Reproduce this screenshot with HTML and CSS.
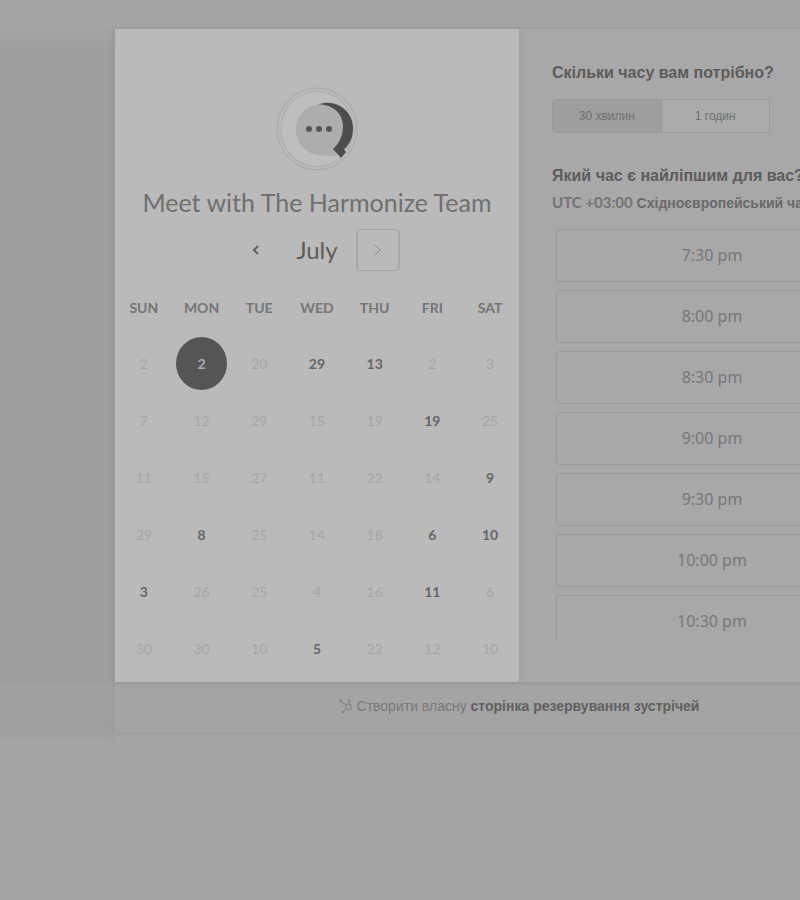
FILE: index.html
```html
<!DOCTYPE html>
<html lang="uk">
<head>
<meta charset="utf-8">
<title>Meet with The Harmonize Team</title>
<link rel="stylesheet" href="styles.css">
</head>
<body>
<div class="page">
  <main class="scheduler">
    <div class="panels">
      <section class="calendar">
        <svg class="avatar" viewBox="0 0 84 86" aria-hidden="true">
          <ellipse class="ring-outer" cx="42" cy="43" rx="40" ry="41"/>
          <ellipse class="ring-inner" cx="42" cy="43" rx="36" ry="37.500"/>
          <path class="logo-bubble" d="M44 19 C58 18 68 28 68 41 C68 50 65 56 59 61 L62 70 C57 70 51 70 44 69 C31 68 21 57 21 44 C21 30 31 19 44 19Z"/>
          <path class="logo-dark" d="M43 18.500 C61 12 78 25 78 42 C78 51 75 58 69 63.500 L71 66 L66 72 L58 63 L62.500 58 C66 53 68 47 68 40 C68 28 58 18 43 18.500Z"/>
          <circle class="logo-dot" cx="34" cy="43" r="3"/>
          <circle class="logo-dot" cx="44" cy="43" r="3"/>
          <circle class="logo-dot" cx="54" cy="43" r="3"/>
        </svg>
        <h1 class="title">Meet with The Harmonize Team</h1>
        <div class="month">
          <button class="nav" type="button" aria-label="Previous month"><svg class="chevron chevron-strong" viewBox="0 0 12 12"><path d="M8 2 L4 6 L8 10"/></svg></button>
          <h2 class="month-name">July</h2>
          <button class="nav nav-focus" type="button" aria-label="Next month"><svg class="chevron" viewBox="0 0 12 12"><path d="M3 1 L8 6 L3 11"/></svg></button>
        </div>
        <table class="days">
          <thead><tr><th>SUN</th><th>MON</th><th>TUE</th><th>WED</th><th>THU</th><th>FRI</th><th>SAT</th></tr></thead>
          <tbody>
            <tr><td>2</td><td><button class="day selected" type="button">2</button></td><td>20</td><td><button class="day" type="button">29</button></td><td><button class="day" type="button">13</button></td><td>2</td><td>3</td></tr>
            <tr><td>7</td><td>12</td><td>29</td><td>15</td><td>19</td><td><button class="day" type="button">19</button></td><td>25</td></tr>
            <tr><td>11</td><td>15</td><td>27</td><td>11</td><td>22</td><td>14</td><td><button class="day" type="button">9</button></td></tr>
            <tr><td>29</td><td><button class="day" type="button">8</button></td><td>25</td><td>14</td><td>18</td><td><button class="day" type="button">6</button></td><td><button class="day" type="button">10</button></td></tr>
            <tr><td><button class="day" type="button">3</button></td><td>26</td><td>25</td><td>4</td><td>16</td><td><button class="day" type="button">11</button></td><td>6</td></tr>
            <tr><td>30</td><td>30</td><td>10</td><td><button class="day" type="button">5</button></td><td>22</td><td>12</td><td>10</td></tr>
          </tbody>
        </table>
      </section>
      <section class="times">
        <h2 class="question">Скільки часу вам потрібно?</h2>
        <div class="durations">
          <button class="duration active" type="button">30 хвилин</button>
          <button class="duration" type="button">1 годин</button>
        </div>
        <h2 class="question">Який час є найліпшим для вас?</h2>
        <p class="zone"><span class="offset">UTC +03:00</span> Східноєвропейський час</p>
        <div class="slots">
          <button class="slot" type="button">7:30 pm</button>
          <button class="slot" type="button">8:00 pm</button>
          <button class="slot" type="button">8:30 pm</button>
          <button class="slot" type="button">9:00 pm</button>
          <button class="slot" type="button">9:30 pm</button>
          <button class="slot" type="button">10:00 pm</button>
          <button class="slot" type="button">10:30 pm</button>
        </div>
      </section>
    </div>
    <footer class="footer">
      <svg class="sprocket" viewBox="0 0 14 14" aria-hidden="true"><circle cx="9.500" cy="8" r="3"/><path d="M1 2 L7.500 6 M10 5 V2 M7.500 10 L4 13"/><circle class="knob" cx="1.500" cy="2" r="1.200"/><circle class="knob" cx="10" cy="1.500" r="1"/><circle class="knob" cx="4" cy="13" r="1"/></svg>
      <span>Створити власну <a class="link" href="#">сторінка резервування зустрічей</a></span>
    </footer>
  </main>
</div>
</body>
</html>
```
FILE: styles.css
```css
* { box-sizing: border-box; }
body {
  margin: 0;
  background: #a5a5a5;
  color: #6f6f6f;
  font-family: "Liberation Sans", Arial, sans-serif;
}
h1, h2, p { margin: 0; }
button {
  margin: 0;
  padding: 0;
  border: 0;
  background: none;
  color: inherit;
  font: inherit;
}
.page { display: flex; overflow: hidden; }
.page::before {
  content: "";
  flex: 0 0 115px;
  background: linear-gradient(#a5a5a5 24px, #9e9e9e 50px, #9e9e9e 680px, #a1a1a1 684px, #9f9f9f 730px, #a5a5a5 745px);
}
.scheduler {
  flex: 0 0 808px;
  margin: 29px 0 20px;
  background: #a4a4a4;
  box-shadow: 0 1px 6px #989898;
}
.panels {
  display: flex;
  background: #a8a8a8;
  box-shadow: 0 1px 4px #959595;
}
.calendar {
  flex: 0 0 50%;
  display: flex;
  flex-direction: column;
  align-items: center;
  padding: 57px 0 5px;
  background: #bababa;
  box-shadow: 0 1px 3px #959595;
  font-family: Lato, sans-serif;
}
.avatar { width: 84px; height: 86px; }
.ring-outer { fill: #b8b8b8; stroke: #a9a9a9; }
.ring-inner { fill: #bebebe; stroke: #adadad; }
.logo-dark { fill: #4d4d4d; }
.logo-bubble { fill: #adadad; }
.logo-dot { fill: #555; }
.title {
  margin-top: 14px;
  font-size: 25px;
  line-height: 32px;
  font-weight: 400;
}
.month {
  display: flex;
  align-items: center;
  gap: 19px;
  margin-top: 11px;
}
.nav {
  display: grid;
  place-items: center;
  width: 42px;
  height: 42px;
  border: 1px solid transparent;
  border-radius: 3px;
}
.nav-focus { border-color: #a2a2a2; box-shadow: 2px 0 0 -1px #aaa, -2px 0 0 -1px #aaa; }
.chevron { width: 12px; height: 12px; fill: none; stroke: #888; }
.chevron-strong { stroke: #606060; stroke-width: 2; }
.month-name { font-size: 24px; line-height: 32px; font-weight: 400; color: #5c5c5c; }
.days {
  width: 100%;
  margin-top: 19px;
  border-collapse: collapse;
  table-layout: fixed;
  text-align: center;
}
.days th {
  height: 45px;
  padding: 0 0 9px;
  font-size: 14px;
  line-height: 20px;
  font-weight: 700;
  color: #757575;
}
.days td {
  height: 57px;
  padding: 0;
  font-size: 14px;
  line-height: 20px;
  color: #a6a6a6;
}
.day { display: block; width: 51px; height: 53px; margin: 0 auto; border-radius: 50%; font-weight: 700; color: #666; }
.selected { background: #555; color: #aaa; }
.times {
  flex: 0 0 50%;
  padding: 32px 33px 40px;
}
.question { font-size: 16px; line-height: 24px; font-weight: 700; color: #5c5c5c; white-space: nowrap; }
.durations {
  display: flex;
  width: 218px;
  height: 34px;
  margin: 14px 0 31px;
  border: 1px solid #999;
  border-radius: 3px;
}
.duration { flex: 1; font-size: 12px; color: #707070; background: #ababab; }
.active { background: #9e9e9e; border-right: 1px solid #999; }
.zone { margin-top: 3px; font-size: 14px; line-height: 22px; font-weight: 700; color: #696969; white-space: nowrap; }
.offset { font-family: Lato, sans-serif; font-size: 15px; color: #747474; }
.slots {
  display: flex;
  flex-direction: column;
  gap: 8px;
  height: 413px;
  margin-top: 15px;
  padding: 0 22px 0 4px;
  overflow: hidden;
}
.slot {
  flex: 0 0 53px;
  padding-bottom: 2px;
  border: 1px solid #999;
  border-radius: 3px;
  font: 400 16px/24px "Noto Sans", sans-serif;
  color: #777;
}
.footer {
  display: flex;
  justify-content: center;
  align-items: center;
  gap: 4px;
  height: 50px;
  padding-bottom: 2px;
  font-size: 14px;
  line-height: 20px;
  color: #787878;
}
.sprocket { width: 14px; height: 14px; fill: none; stroke: #7c7c7c; stroke-width: 1; overflow: visible; }
.knob { fill: #7c7c7c; stroke: none; }
.link { color: #606060; font-weight: 700; text-decoration: none; }
```
